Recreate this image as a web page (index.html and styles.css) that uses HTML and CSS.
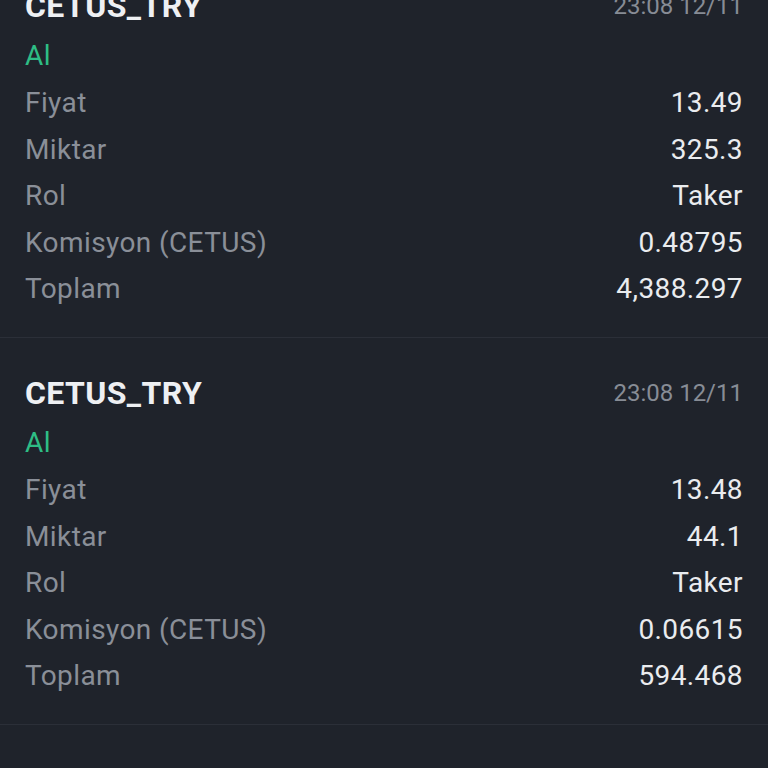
FILE: index.html
```html
<!DOCTYPE html>
<html lang="tr">
<head>
    <meta charset="UTF-8">
    <meta name="viewport" content="width=device-width, initial-scale=1.0">
    <title>İşlem Geçmişi</title>
    <link rel="stylesheet" href="styles.css">
</head>
<body>
    <div class="trade-list">
        <!-- Trade 1 -->
        <div class="trade">
            <div class="trade-head">
                <span class="pair">CETUS_TRY</span>
                <span class="time">23:08 12/11</span>
            </div>
            <div class="side buy">Al</div>
            <div class="row"><span class="label">Fiyat</span><span class="value">13.49</span></div>
            <div class="row"><span class="label">Miktar</span><span class="value">325.3</span></div>
            <div class="row"><span class="label">Rol</span><span class="value">Taker</span></div>
            <div class="row"><span class="label">Komisyon (CETUS)</span><span class="value">0.48795</span></div>
            <div class="row"><span class="label">Toplam</span><span class="value">4,388.297</span></div>
        </div>

        <!-- Trade 2 -->
        <div class="trade">
            <div class="trade-head">
                <span class="pair">CETUS_TRY</span>
                <span class="time">23:08 12/11</span>
            </div>
            <div class="side buy">Al</div>
            <div class="row"><span class="label">Fiyat</span><span class="value">13.48</span></div>
            <div class="row"><span class="label">Miktar</span><span class="value">44.1</span></div>
            <div class="row"><span class="label">Rol</span><span class="value">Taker</span></div>
            <div class="row"><span class="label">Komisyon (CETUS)</span><span class="value">0.06615</span></div>
            <div class="row"><span class="label">Toplam</span><span class="value">594.468</span></div>
        </div>
    </div>
</body>
</html>
```

FILE: styles.css
```css
/* Base */
html, body {
    background: #1f232b;
}
body {
    margin: 0;
    font-family: Roboto, "Noto Sans", sans-serif;
    color: #eaecef;
    overflow: hidden;
}

/* List is scrolled so the first trade is cut at the top */
.trade-list {
    margin-top: -49px;
}
.trade {
    padding: 31px 25px 25px 25px;
    border-bottom: 1px solid #2b2f38;
}
.trade-head {
    display: flex;
    justify-content: space-between;
    align-items: center;
    height: 48px;
}
.pair {
    font-size: 32px;
    font-weight: 700;
    letter-spacing: 0.4px;
    color: #eef0f3;
}
.time {
    font-size: 24px;
    color: #878c95;
}
.side {
    margin-top: 3px;
    height: 46.5px;
    line-height: 46.5px;
    font-size: 28px;
    letter-spacing: 0.4px;
}
.side.buy {
    color: #2ebd85;
}
.row {
    display: flex;
    justify-content: space-between;
    align-items: center;
    height: 46.5px;
    font-size: 28px;
    letter-spacing: 0.4px;
}
.label {
    color: #8a8f98;
}
.value {
    color: #eaecef;
}
```
